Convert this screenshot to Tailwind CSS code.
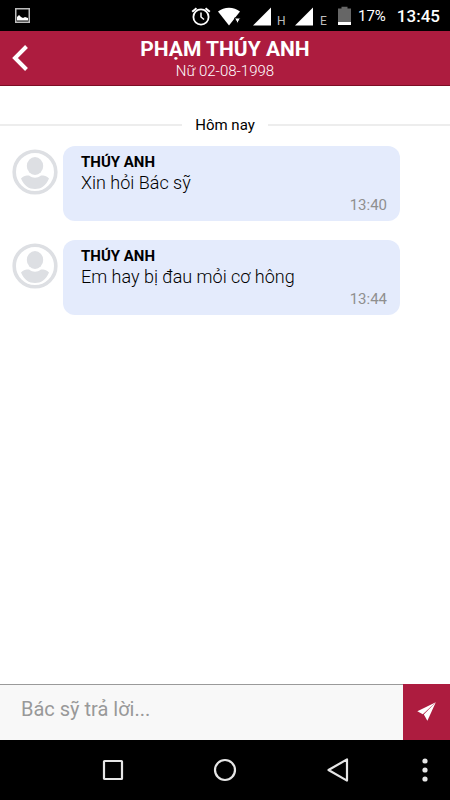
<!DOCTYPE html>
<html lang="vi">
<head>
<meta charset="utf-8">
<meta name="viewport" content="width=device-width, initial-scale=1">
<title>Phạm Thúy Anh</title>
<script src="https://cdn.jsdelivr.net/npm/@tailwindcss/browser@4"></script>
</head>
<body class="flex h-screen flex-col bg-white font-['Roboto',sans-serif] text-black">

<div class="flex h-[31px] shrink-0 items-center bg-black pr-[10px] pl-[15px] text-white">
  <svg class="h-[15px] w-[15px]" viewBox="0 0 15 15" aria-hidden="true"><rect x=".75" y=".75" width="13.5" height="13.5" fill="none" stroke="#bdbdbd" stroke-width="1.5"/><path d="M2 12.500V9l2-2 2 2 2 1 2-1 3 1v2.500z" fill="#fff"/></svg>
  <svg class="ml-auto h-5 w-5" viewBox="0 0 20 20" fill="none" stroke="#fff" aria-hidden="true"><circle cx="10" cy="11" r="7.600" stroke-width="1.800"/><path d="M10 6.500V11l3 2.500" stroke-width="1.500"/><path d="M1.200 5.800 5.500 2.200M18.800 5.800l-4.300-3.600" stroke-width="2"/></svg>
  <svg class="ml-[7px] h-5 w-6" viewBox="0 0 24 20" fill="#fff" aria-hidden="true"><path d="M0 5.500C6 .4 16 .4 22 5.500L11 19.500z"/><path d="M16.500 12h6l-3 5.500z" stroke="#000" stroke-width="1"/></svg>
  <svg class="ml-[11px] h-5 w-[18px]" viewBox="0 0 18 20" fill="#fff" aria-hidden="true"><path d="M0 19.500 18 1.500v18z"/></svg>
  <span class="ml-[6px] w-2 pt-[10px] text-xs text-[#bdbdbd]">H</span>
  <svg class="ml-[10px] h-5 w-[18px]" viewBox="0 0 18 20" fill="#fff" aria-hidden="true"><path d="M0 19.500 18 1.500v18z"/></svg>
  <span class="ml-[7px] w-2 pt-[10px] text-xs text-[#bdbdbd]">E</span>
  <svg class="ml-[10px] h-5 w-[13px]" viewBox="0 0 13 20" aria-hidden="true"><path d="M0 2.500h3.500V.8h6v1.700H13V16H0z" fill="#666"/><path d="M0 16h13v3H0z" fill="#fff"/></svg>
  <span class="ml-[7px] pt-[2px] text-[15px]">17%</span>
  <span class="ml-[11px] pt-[2px] text-[17px] font-medium">13:45</span>
</div>

<header class="relative flex h-[55px] shrink-0 flex-col items-center border-b border-[#7d0d24] bg-[#ad1c3f] pt-[6px] text-white">
  <button type="button" aria-label="Quay lại" class="absolute inset-y-0 left-0 w-10 pl-3">
    <svg class="h-[26px] w-4" viewBox="0 0 16 26" fill="none" stroke="#fff" stroke-width="4" aria-hidden="true"><path d="M14.500 1.500 3 13l11.500 11.500"/></svg>
  </button>
  <h1 class="text-[21px] leading-6 font-bold">PHẠM THÚY ANH</h1>
  <p class="text-[15px] leading-5 font-light">Nữ 02-08-1998</p>
</header>

<main class="flex-1 overflow-y-auto pt-[29px]">
  <div class="flex items-center gap-[13px] text-[15px] leading-5">
    <span class="h-[2px] flex-1 bg-[#ededed]"></span>
    <span>Hôm nay</span>
    <span class="h-[2px] flex-1 bg-[#ededed]"></span>
  </div>
  <ul class="mt-[11px] flex flex-col gap-[19px] pr-[50px] pl-3">
    <li class="flex gap-[5px]">
      <svg class="mt-[3px] h-[46px] w-[46px] shrink-0" viewBox="0 0 46 46" role="img" aria-label="Thúy Anh"><circle cx="23" cy="23" r="20.800" fill="none" stroke="#dddfe3" stroke-width="3.600"/><ellipse cx="23" cy="17" rx="8.200" ry="9" fill="#dddfe3"/><path d="M9 29.500C11 27 14 26.500 17 26.500c4 3 8 3 12 0 3 0 6 .5 8 3C34 37 29 40 23 40S12 37 9 29.500z" fill="#dddfe3"/></svg>
      <article class="flex min-h-[75px] flex-1 flex-col rounded-xl bg-[#e4ebfc] pt-[6px] pr-[13px] pb-[6px] pl-[18px]">
        <h2 class="text-[15px] leading-5 font-bold">THÚY ANH</h2>
        <p class="text-lg leading-[22px] font-light">Xin hỏi Bác sỹ</p>
        <time class="mt-auto self-end text-[15px] leading-5 text-[#8f8f8f]">13:40</time>
      </article>
    </li>
    <li class="flex gap-[5px]">
      <svg class="mt-[3px] h-[46px] w-[46px] shrink-0" viewBox="0 0 46 46" role="img" aria-label="Thúy Anh"><circle cx="23" cy="23" r="20.800" fill="none" stroke="#dddfe3" stroke-width="3.600"/><ellipse cx="23" cy="17" rx="8.200" ry="9" fill="#dddfe3"/><path d="M9 29.500C11 27 14 26.500 17 26.500c4 3 8 3 12 0 3 0 6 .5 8 3C34 37 29 40 23 40S12 37 9 29.500z" fill="#dddfe3"/></svg>
      <article class="flex min-h-[75px] flex-1 flex-col rounded-xl bg-[#e4ebfc] pt-[6px] pr-[13px] pb-[6px] pl-[18px]">
        <h2 class="text-[15px] leading-5 font-bold">THÚY ANH</h2>
        <p class="text-lg leading-[22px] font-light">Em hay bị đau mỏi cơ hông</p>
        <time class="mt-auto self-end text-[15px] leading-5 text-[#8f8f8f]">13:44</time>
      </article>
    </li>
  </ul>
</main>

<form class="flex h-14 shrink-0">
  <input type="text" aria-label="Bác sỹ trả lời" placeholder="Bác sỹ trả lời..." class="min-w-0 flex-1 border-t border-[#9a9a9a] bg-[#f8f8f8] pb-[7px] pl-[21px] text-xl outline-none placeholder:text-[#999]">
  <button type="button" aria-label="Gửi" class="flex w-[47px] items-center justify-center bg-[#ad1c3f] pb-[2px]">
    <svg class="h-[19px] w-[19px]" viewBox="0 0 19 19" fill="#fff" aria-hidden="true"><path d="M18.800.3.300 9.200l5.500 3z"/><path d="M18.800.3 6.800 12.500l3.600 6.200z"/></svg>
  </button>
</form>

<nav class="grid h-15 shrink-0 grid-cols-[1fr_2fr_2fr_2fr_1fr] bg-black">
  <button type="button" aria-label="Ứng dụng gần đây" class="col-start-2 flex items-center justify-center"><svg class="h-6 w-6" viewBox="0 0 24 24" fill="none" stroke="#e6e6e6" stroke-width="2.200" aria-hidden="true"><rect x="3" y="3" width="18" height="18" rx=".6"/></svg></button>
  <button type="button" aria-label="Màn hình chính" class="flex items-center justify-center"><svg class="h-6 w-6" viewBox="0 0 24 24" fill="none" stroke="#e6e6e6" stroke-width="2.200" aria-hidden="true"><circle cx="12" cy="12" r="10"/></svg></button>
  <button type="button" aria-label="Trở về" class="flex items-center justify-center"><svg class="h-6 w-6" viewBox="0 0 24 24" fill="none" stroke="#e6e6e6" stroke-width="2.200" stroke-linejoin="round" aria-hidden="true"><path d="M21 1.400v21.200L2.500 12z"/></svg></button>
  <button type="button" aria-label="Thêm" class="flex items-center justify-center pl-[6px]"><svg class="h-6 w-6" viewBox="0 0 24 24" fill="#e6e6e6" aria-hidden="true"><circle cx="12" cy="3" r="2.600"/><circle cx="12" cy="12" r="2.600"/><circle cx="12" cy="21" r="2.600"/></svg></button>
</nav>
</body>
</html>
